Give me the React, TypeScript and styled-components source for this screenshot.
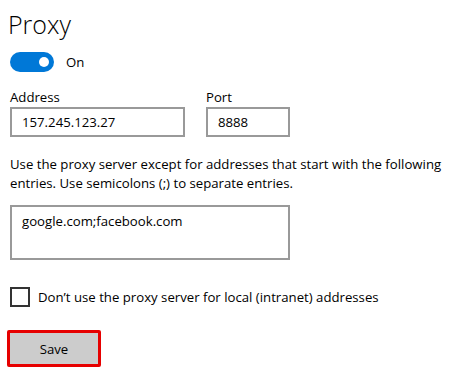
import React from "react";
import styled, { createGlobalStyle } from "styled-components";

const Global = createGlobalStyle`
  html, body { margin: 0; padding: 0; background: #fff; }
  body { font-family: "Open Sans", "Noto Sans", sans-serif; color: #000; }
`;

const Page = styled.div`
  padding: 4px 0 0 10px;
  display: flex;
  flex-direction: column;
  align-items: flex-start;
`;

const Title = styled.h1`
  margin: 0 0 0 -2px;
  font-weight: 300;
  font-size: 25px;
  line-height: 40px;
`;

const ToggleRow = styled.div`
  display: flex;
  align-items: center;
  gap: 12px;
  margin-top: 8px;
  font-size: 13.2px;
`;

const Toggle = styled.div`
  width: 44px;
  height: 20px;
  border-radius: 10px;
  background: #0078d7;
  position: relative;
  &::after {
    content: "";
    position: absolute;
    right: 5px;
    top: 5px;
    width: 10px;
    height: 10px;
    border-radius: 50%;
    background: #fff;
  }
`;

const FieldRow = styled.div`
  display: flex;
  gap: 21px;
  margin-top: 15px;
`;

const Field = styled.div`
  display: flex;
  flex-direction: column;
`;

const Label = styled.div`
  font-size: 13.2px;
  line-height: 20px;
`;

const Input = styled.div<{ $w: number; $h?: number }>`
  box-sizing: border-box;
  width: ${(p) => p.$w}px;
  height: ${(p) => p.$h ?? 30}px;
  border: 2px solid #999;
  padding: 3px 0 0 10px;
  font-size: 13.2px;
  line-height: 20px;
`;

const Para = styled.p`
  margin: 18px 0 0;
  font-size: 13.2px;
  line-height: 19px;
  width: 450px;
`;

const Area = styled(Input)`
  margin-top: 12px;
  padding-top: 4px;
`;

const CheckRow = styled.label`
  display: flex;
  align-items: center;
  gap: 8px;
  margin-top: 27px;
  font-size: 13.2px;
`;

const Box = styled.span`
  box-sizing: border-box;
  width: 20px;
  height: 20px;
  border: 2px solid #333;
`;

const SaveFrame = styled.div`
  margin: 23px 0 0 -3px;
  border: 3px solid #e60000;
  border-radius: 2px;
`;

const Button = styled.button`
  display: block;
  width: 88px;
  height: 31px;
  border: none;
  background: #cccccc;
  font-family: inherit;
  font-size: 13.2px;
  color: #000;
  padding: 0;
`;

export default function App() {
  return (
    <>
      <Global />
      <Page>
        <Title>Proxy</Title>
        <ToggleRow>
          <Toggle />
          <span>On</span>
        </ToggleRow>
        <FieldRow>
          <Field>
            <Label>Address</Label>
            <Input $w={175}>157.245.123.27</Input>
          </Field>
          <Field>
            <Label>Port</Label>
            <Input $w={84}>8888</Input>
          </Field>
        </FieldRow>
        <Para>
          Use the proxy server except for addresses that start with the following
          entries. Use semicolons (;) to separate entries.
        </Para>
        <Area $w={280} $h={55}>google.com;facebook.com</Area>
        <CheckRow>
          <Box />
          <span>Don’t use the proxy server for local (intranet) addresses</span>
        </CheckRow>
        <SaveFrame>
          <Button>Save</Button>
        </SaveFrame>
      </Page>
    </>
  );
}
